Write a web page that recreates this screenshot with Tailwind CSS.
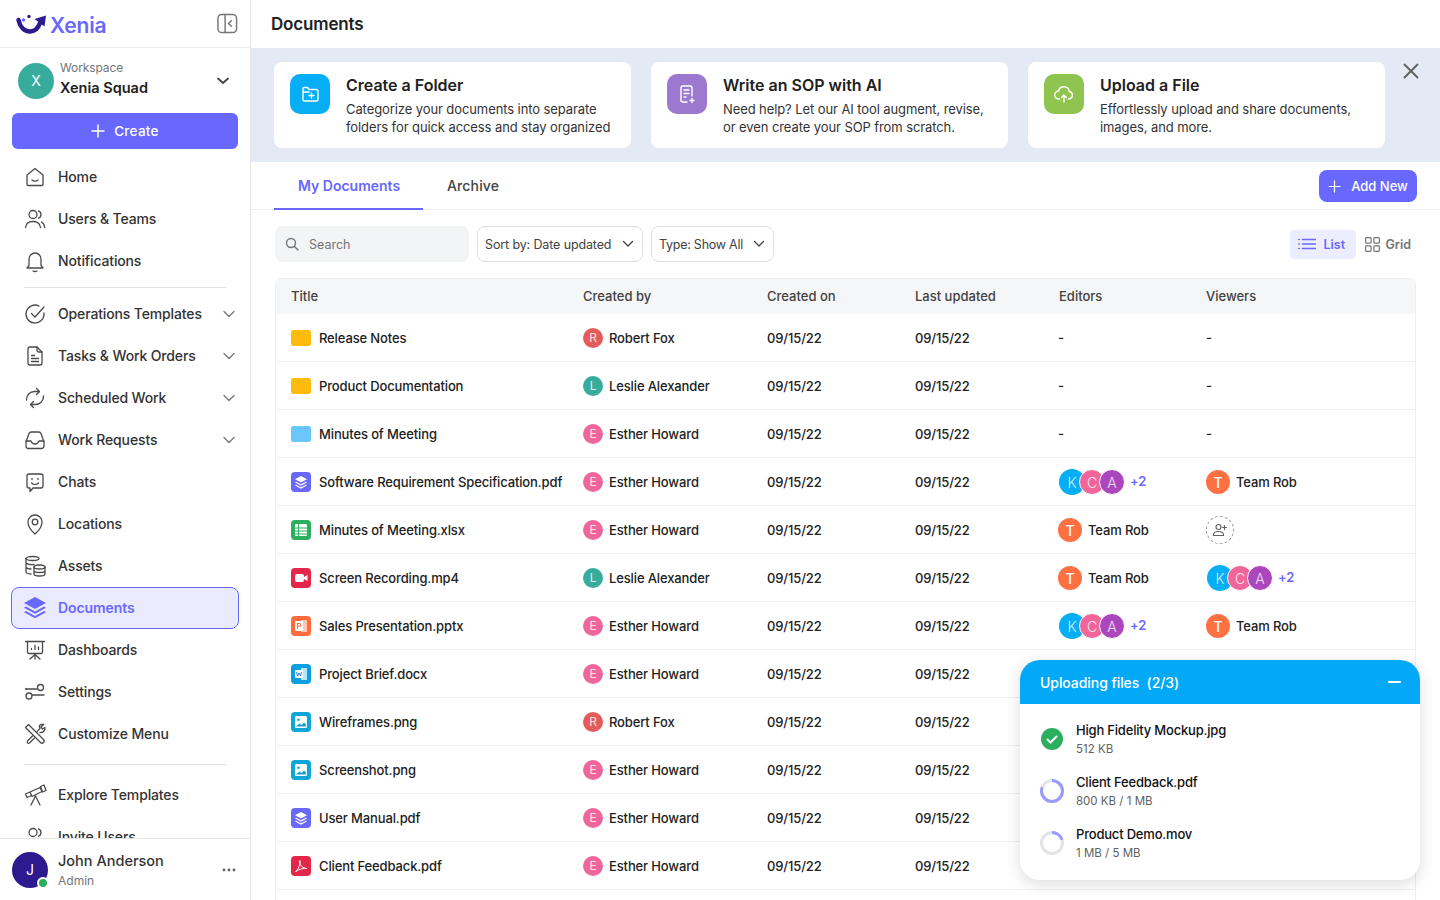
<!DOCTYPE html>
<html lang="en">

<head>
  <meta charset="UTF-8">
  <meta name="viewport" content="width=device-width, initial-scale=1.0">
  <title>Documents</title>
  <script src="https://cdn.jsdelivr.net/npm/@tailwindcss/browser@4"></script>
</head>

<body class="h-screen overflow-hidden bg-white text-[#212121] font-['Inter',sans-serif]">
  <div class="flex h-[900px] overflow-hidden">

    <!-- sidebar -->
    <aside class="w-[251px] shrink-0 h-full border-r border-[#e8e8e8] flex flex-col">
      <div class="h-[48px] shrink-0 border-b border-[#eeeeee] flex items-center justify-between pl-[15px] pr-[12px]">
        <div class="flex items-center gap-[3px]">
          <svg class="w-[32px] h-[22px]" viewBox="0 0 32 22" fill="none">
            <path d="M3.500 7c1.500 7 6 11.500 11.500 11.500 4.500 0 8-3 10-8.500" stroke="#2d1a8e" stroke-width="4.500" stroke-linecap="round"/>
            <path d="M19.500 6 31 2.500l-1.500 11z" fill="#2d1a8e"/>
            <circle cx="8.500" cy="7" r="1.700" fill="#6868fe"/>
            <circle cx="14" cy="3.500" r="1.700" fill="#2d1a8e"/>
          </svg>
          <span class="pt-[3px] text-[21px] leading-none font-semibold text-[#6868fe] tracking-[-0.01em]">Xenia</span>
        </div>
        <svg class="w-[21px] h-[21px] text-[#757575]" viewBox="0 0 22 22" fill="none" stroke="currentColor" stroke-width="1.500">
          <rect x="1" y="1.500" width="19.500" height="19" rx="4"/>
          <path d="M8.500 1.500v19M15 8l-3 3 3 3" stroke-linecap="round" stroke-linejoin="round"/>
        </svg>
      </div>

      <div class="h-[65px] shrink-0 flex items-center pl-[18px] pr-[19px]">
        <div class="w-[36px] h-[36px] rounded-full bg-[#37ac9d] text-white text-[14px] font-normal flex items-center justify-center">X</div>
        <div class="ml-[6px] flex-1 pb-[2px]">
          <div class="text-[12px] leading-[16px] text-[#757575] tracking-[-0.01em]">Workspace</div>
          <div class="pt-[1px] text-[14.500px] leading-[22px] font-semibold">Xenia Squad</div>
        </div>
        <svg class="w-[16px] h-[16px] text-[#424242]" viewBox="0 0 16 16" fill="none" stroke="currentColor" stroke-width="1.800" stroke-linecap="round" stroke-linejoin="round"><path d="m3 5.500 5 4.500 5-4.500"/></svg>
      </div>

      <button class="mx-[12px] h-[36px] shrink-0 rounded-[6px] bg-[#6868fe] text-white text-[13.500px] font-medium tracking-[0.02em] flex items-center justify-center gap-[9px]">
        <svg class="w-[14px] h-[14px]" viewBox="0 0 14 14" fill="none" stroke="currentColor" stroke-width="1.500" stroke-linecap="round"><path d="M7 1v12M1 7h12"/></svg>
        Create
      </button>

      <nav id="nav" class="flex-1 min-h-0 overflow-hidden pt-[7px] -mb-[1px]"></nav>

      <div class="relative h-[62px] shrink-0 border-t border-[#e4e4e4] bg-white flex items-center pl-[12px] pr-[14px]">
        <div class="relative w-[36px] h-[36px] rounded-full bg-[#2d1a8e] text-white text-[14px] flex items-center justify-center">J
          <span class="absolute right-[-1px] bottom-[-1px] w-[12px] h-[12px] rounded-full bg-[#2bae5e] border-2 border-white"></span>
        </div>
        <div class="ml-[10px] flex-1 pt-[2px]">
          <div class="text-[14.500px] leading-[20px] font-medium text-[#333333]">John Anderson</div>
          <div class="text-[12px] leading-[20px] text-[#757575]">Admin</div>
        </div>
        <svg class="w-[14px] h-[4px] text-[#616161]" viewBox="0 0 14 4" fill="currentColor"><circle cx="2" cy="2" r="1.400"/><circle cx="7" cy="2" r="1.400"/><circle cx="12" cy="2" r="1.400"/></svg>
      </div>
    </aside>

    <!-- main -->
    <main class="relative flex-1 min-w-0 h-full overflow-hidden">
      <header class="h-[48px] pt-[2px] flex items-center pl-[20px]">
        <h1 class="text-[17px] font-semibold tracking-[-0.01em]">Documents</h1>
      </header>

      <section class="relative h-[114px] bg-[#e3e9f5] pt-[14px] pl-[23px] flex gap-[20px]">
        <div class="w-[357px] h-[86px] rounded-[8px] bg-white pl-[16px] pt-[12px] flex gap-[16px]">
          <div class="w-[40px] h-[40px] shrink-0 rounded-[10px] bg-[#06aef5] flex items-center justify-center">
            <svg class="w-[20px] h-[20px] text-white" viewBox="0 0 20 20" fill="none" stroke="currentColor" stroke-width="1.400" stroke-linecap="round" stroke-linejoin="round"><path d="M3 15.500V4.500a1 1 0 0 1 1-1h3.500l1.500 2h7a2 2 0 0 1 2 2v8a1.500 1.500 0 0 1-1.500 1.500h-12A1.500 1.500 0 0 1 3 15.500zM3 8h6M11.500 9v5M9 11.500h5"/></svg>
          </div>
          <div>
            <div class="text-[16px] leading-[22px] font-semibold">Create a Folder</div>
            <p class="mt-[4px] text-[13px] leading-[18px] text-[#333333] tracking-[-0.007em]">Categorize your documents into separate<br>folders for quick access and stay organized</p>
          </div>
        </div>
        <div class="w-[357px] h-[86px] rounded-[8px] bg-white pl-[16px] pt-[12px] flex gap-[16px]">
          <div class="w-[40px] h-[40px] shrink-0 rounded-[10px] bg-[#9c78cf] flex items-center justify-center">
            <svg class="w-[20px] h-[20px] text-white" viewBox="0 0 20 20" fill="none" stroke="currentColor" stroke-width="1.400" stroke-linecap="round" stroke-linejoin="round"><path d="M10 18H6a2 2 0 0 1-2-2V4a2 2 0 0 1 2-2h7a2 2 0 0 1 2 2v8M7 6h5M7 9.500h5M7 13h2M15 14.500v4M13 16.500h4"/></svg>
          </div>
          <div>
            <div class="text-[16px] leading-[22px] font-semibold">Write an SOP with AI</div>
            <p class="mt-[4px] text-[13px] leading-[18px] text-[#333333] tracking-[-0.007em]">Need help? Let our AI tool augment, revise,<br>or even create your SOP from scratch.</p>
          </div>
        </div>
        <div class="w-[357px] h-[86px] rounded-[8px] bg-white pl-[16px] pt-[12px] flex gap-[16px]">
          <div class="w-[40px] h-[40px] shrink-0 rounded-[10px] bg-[#8fc44f] flex items-center justify-center">
            <svg class="w-[22px] h-[22px] text-white" viewBox="0 0 22 22" fill="none" stroke="currentColor" stroke-width="1.400" stroke-linecap="round" stroke-linejoin="round"><path d="M6.500 16H6a4 4 0 0 1-.5-8 5.500 5.500 0 0 1 10.800.500A3.800 3.800 0 0 1 16 16h-.5M11 19v-7M8.500 14.500 11 12l2.500 2.500"/></svg>
          </div>
          <div>
            <div class="text-[16px] leading-[22px] font-semibold">Upload a File</div>
            <p class="mt-[4px] text-[13px] leading-[18px] text-[#333333] tracking-[-0.007em]">Effortlessly upload and share documents,<br>images, and more.</p>
          </div>
        </div>
        <svg class="absolute right-[21px] top-[15px] w-[16px] h-[16px] text-[#616161]" viewBox="0 0 16 16" fill="none" stroke="currentColor" stroke-width="1.900" stroke-linecap="round"><path d="m1.500 1.500 13 13M14.500 1.500l-13 13"/></svg>
      </section>

      <!-- tabs -->
      <div class="h-[48px] border-b border-[#eeeeee] pl-[23px] pr-[23px] flex items-start justify-between">
        <div class="flex h-[48px]">
          <div class="w-[149px] h-[48px] pl-[24px] flex items-center border-b-2 border-[#6868fe] text-[14px] font-semibold text-[#6868fe]">My Documents</div>
          <div class="h-[48px] px-[24px] flex items-center text-[14px] font-medium text-[#424242] tracking-[0.01em] pb-[2px]">Archive</div>
        </div>
        <button class="mt-[8px] pt-[1px] w-[98px] h-[32px] rounded-[8px] bg-[#6868fe] text-white text-[13px] font-medium flex items-center justify-center gap-[10px]">
          <svg class="w-[13px] h-[13px]" viewBox="0 0 14 14" fill="none" stroke="currentColor" stroke-width="1.300" stroke-linecap="round"><path d="M7 1v12M1 7h12"/></svg>
          Add New
        </button>
      </div>

      <!-- toolbar -->
      <div class="h-[68px] pl-[24px] pr-[29px] flex items-center">
        <div class="w-[194px] h-[36px] rounded-[8px] bg-[#f3f4f6] flex items-center pl-[10px] gap-[10px] text-[12.500px] text-[#757575]">
          <svg class="w-[14px] h-[14px]" viewBox="0 0 14 14" fill="none" stroke="currentColor" stroke-width="1.400" stroke-linecap="round"><circle cx="6" cy="6" r="4.500"/><path d="m9.500 9.500 3.500 3.500"/></svg>
          <span class="pt-[2px]">Search</span>
        </div>
        <div class="ml-[8px] w-[166px] h-[36px] rounded-[8px] border border-[#e0e0e0] flex items-center justify-between pl-[7px] pr-[8px] text-[12.500px] tracking-[-0.01em] text-[#424242]">
          <span class="pt-[2px]">Sort by: Date updated</span>
          <svg class="w-[12px] h-[12px]" viewBox="0 0 12 12" fill="none" stroke="currentColor" stroke-width="1.300" stroke-linecap="round" stroke-linejoin="round"><path d="m1.500 3.500 4.500 4.500 4.500-4.500"/></svg>
        </div>
        <div class="ml-[8px] w-[123px] h-[36px] rounded-[8px] border border-[#e0e0e0] flex items-center justify-between pl-[7px] pr-[8px] text-[12.500px] tracking-[-0.02em] text-[#424242]">
          <span class="pt-[2px]">Type: Show All</span>
          <svg class="w-[12px] h-[12px]" viewBox="0 0 12 12" fill="none" stroke="currentColor" stroke-width="1.300" stroke-linecap="round" stroke-linejoin="round"><path d="m1.500 3.500 4.500 4.500 4.500-4.500"/></svg>
        </div>
        <div class="ml-auto flex items-center">
          <div class="w-[66px] h-[29px] pl-[8px] rounded-[4px] bg-[#ecedff] flex items-center gap-[7px] text-[12.500px] font-semibold text-[#6868fe]">
            <svg class="w-[18px] h-[12px]" viewBox="0 0 18 12" fill="none" stroke="currentColor" stroke-width="1.500" stroke-linecap="round"><path d="M0.800 1.500h.5M0.800 6h.5M0.800 10.500h.5M4.500 1.500h13M4.500 6h13M4.500 10.500h13"/></svg>
            <span class="pt-[2px]">List</span>
          </div>
          <div class="ml-[9px] flex items-center gap-[5px] text-[12.500px] font-semibold text-[#757575]">
            <svg class="w-[15px] h-[15px]" viewBox="0 0 15 15" fill="none" stroke="currentColor" stroke-width="1.200"><rect x="0.600" y="0.600" width="5.500" height="5.500" rx="0.800"/><rect x="8.900" y="0.600" width="5.500" height="5.500" rx="0.800"/><rect x="0.600" y="8.900" width="5.500" height="5.500" rx="0.800"/><rect x="8.900" y="8.900" width="5.500" height="5.500" rx="0.800"/></svg>
            <span class="pt-[2px]">Grid</span>
          </div>
        </div>
      </div>

      <!-- table -->
      <div class="ml-[24px] w-[1141px] border border-[#eeeeee] rounded-t-[6px]">
        <div class="h-[35px] rounded-t-[6px] bg-[#f5f6f7] pl-[15px] grid grid-cols-[292px_184px_148px_143px_148px_1fr] items-center text-[13px] font-[450] text-[#424242]">
          <div>Title</div><div>Created by</div><div>Created on</div><div>Last updated</div><div class="pl-[1px]">Editors</div><div>Viewers</div>
        </div>
        <div id="rows"></div>
        <div class="h-[48px]"></div>
      </div>

      <!-- upload panel -->
      <div class="absolute left-[769px] top-[660px] w-[400px] h-[220px] rounded-[20px] bg-white shadow-[0_4px_16px_rgba(0,0,0,0.14)] overflow-hidden">
        <div class="h-[44px] bg-[#03a9f7] text-white pl-[20px] pr-[19px] flex items-center justify-between text-[14px] font-medium tracking-[-0.005em]">
          <span>Uploading files&nbsp; (2/3)</span>
          <span class="w-[13px] h-[2px] bg-white rounded-full"></span>
        </div>
        <div class="pl-[20px] pt-[16px]">
          <div class="h-[52px] flex items-start">
            <svg class="mt-[7px] w-[24px] h-[24px] shrink-0" viewBox="0 0 24 24"><circle cx="12" cy="12" r="11" fill="#2bae5e"/><path d="m7.500 12.500 3 3 6-6" fill="none" stroke="#fff" stroke-width="2" stroke-linecap="round" stroke-linejoin="round"/></svg>
            <div class="ml-[12px]">
              <div class="text-[13px] leading-[20px] font-medium text-[#111111] tracking-[-0.015em]">High Fidelity Mockup.jpg</div>
              <div class="mt-[1px] text-[11.500px] leading-[16px] text-[#616161]">512 KB</div>
            </div>
          </div>
          <div class="h-[52px] flex items-start">
            <svg class="mt-[7px] w-[24px] h-[24px] shrink-0" viewBox="0 0 24 24" fill="none" stroke-width="3"><circle cx="12" cy="12" r="10.500" stroke="#e2e4e9"/><circle cx="12" cy="12" r="10.500" stroke="#9b9bfe" stroke-dasharray="53 66" transform="rotate(-90 12 12)"/></svg>
            <div class="ml-[12px]">
              <div class="text-[13px] leading-[20px] font-medium text-[#111111] tracking-[-0.015em]">Client Feedback.pdf</div>
              <div class="mt-[1px] text-[11.500px] leading-[16px] text-[#616161]">800 KB / 1 MB</div>
            </div>
          </div>
          <div class="h-[52px] flex items-start">
            <svg class="mt-[7px] w-[24px] h-[24px] shrink-0" viewBox="0 0 24 24" fill="none" stroke-width="3"><circle cx="12" cy="12" r="10.500" stroke="#e2e4e9"/><circle cx="12" cy="12" r="10.500" stroke="#9b9bfe" stroke-dasharray="13 66" transform="rotate(-90 12 12)"/></svg>
            <div class="ml-[12px]">
              <div class="text-[13px] leading-[20px] font-medium text-[#111111] tracking-[-0.015em]">Product Demo.mov</div>
              <div class="mt-[1px] text-[11.500px] leading-[16px] text-[#616161]">1 MB / 5 MB</div>
            </div>
          </div>
        </div>
      </div>
    </main>
  </div>

  <script>
    // sidebar icons, 24 box
    const NAV_ICONS = {
      home: '<path d="M4 10 12 3.500 20 10v9.500a1 1 0 0 1-1 1H5a1 1 0 0 1-1-1z"/><path d="M9 15c1.500 1.500 4.500 1.500 6 0"/>',
      users: '<circle cx="10" cy="7.500" r="4"/><path d="M2.500 20.500c.5-4 3.500-6 7.500-6s7 2 7.500 6"/><path d="M15.500 3.800a4 4 0 0 1 0 7.400M18.500 15c1.800 1 3 3 3.200 5.500"/>',
      bell: '<path d="M6 16.500V10a6 6 0 0 1 12 0v6.500l2 2.500H4z"/><path d="M10 22c1.200.6 2.800.6 4 0"/>',
      check: '<path d="M21 11v1a9 9 0 1 1-5-8"/><path d="m8.500 11.500 3.500 3.500 9-10"/>',
      doc: '<path d="M7 3h7l5 5v11a2 2 0 0 1-2 2H7a2 2 0 0 1-2-2V5a2 2 0 0 1 2-2z"/><path d="M14 3v3.500A1.500 1.500 0 0 0 15.500 8H19M8.500 11.500h3M8.500 14.500h7M8.500 17.500h7"/>',
      sync: '<path d="M3.500 14a8 8 0 0 1 8-8.500H16M13.500 2.500l3 3-3 3M20.500 10a8 8 0 0 1-8 8.500H8M10.500 15.500l-3 3 3 3"/>',
      inbox: '<path d="M3 14 6 5.500A2.500 2.500 0 0 1 8.300 4h7.400A2.500 2.500 0 0 1 18 5.500l3 8.500v4a2.500 2.500 0 0 1-2.500 2.500h-13A2.500 2.500 0 0 1 3 18z"/><path d="M3 13h5c1 2.500 2.500 3 4 3s3-.5 4-3h5"/>',
      chat: '<path d="M6 4h12a2 2 0 0 1 2 2v10a2 2 0 0 1-2 2h-8l-3 3.500V18H6a2 2 0 0 1-2-2V6a2 2 0 0 1 2-2z"/><path d="M9 8.500v1M15 8.500v1M8.500 13c2 1.800 5 1.800 7 0"/>',
      pin: '<path d="M12 22s7-6 7-12a7 7 0 0 0-14 0c0 6 7 12 7 12z"/><circle cx="12" cy="10" r="2.800"/>',
      assets: '<ellipse cx="9.500" cy="4.500" rx="6.500" ry="2"/><path d="M3 4.500V18c0 1 1.500 1.800 5 2M3 9c1 1.200 4 1.800 8 1.500M3 13.500c1 .9 2.500 1.400 5 1.500"/><ellipse cx="16.500" cy="13" rx="5.500" ry="2"/><path d="M11 13v7c0 1.200 2.500 2 5.500 2s5.500-.8 5.500-2v-7M11 16.500c0 1.200 2.500 2 5.500 2s5.500-.8 5.500-2"/>',
      board: '<path d="M2.500 3.500h19M4.500 3.500V14a1.500 1.500 0 0 0 1.500 1.500h12a1.500 1.500 0 0 0 1.500-1.500V3.500M12 15.500V21M7 21l5-4.500 5 4.500M8.500 11.500v-1M12 11.500v-4M15.500 11.500V9"/>',
      sliders: '<circle cx="17.500" cy="7.500" r="3"/><path d="M3 9h11"/><circle cx="6" cy="16" r="3"/><path d="M9.500 15H21"/><path d="M3 8.500v1" />',
      tools: '<path d="m4 7 13.500 13.500a2 2 0 0 0 3-3L7 4 5.500 2.500l-3 3z"/><path d="M14 9.500 17 6.500a4 4 0 0 1-.5-3 4.500 4.500 0 0 1 4-1l-2.500 2.500 1.500 2 2.500-1.500a4.500 4.500 0 0 1-5 5M9.500 14l-5 5a2 2 0 0 0 0 2 2 2 0 0 0 2 0l5-5"/>',
      scope: '<path d="M7 9 17 4.500l2 4-10 5zM17.500 3.500 21 2l2 5.500-3.500 1.500zM2.500 11 7 9l1.500 3.500-4.500 2zM12.500 13l-4.500 9M12.500 13l4.500 9"/>',
    };
    const CHEVRON = '<svg class="ml-auto mr-[2px] w-[14px] h-[14px] text-[#757575]" viewBox="0 0 14 14" fill="none" stroke="currentColor" stroke-width="1.300" stroke-linecap="round" stroke-linejoin="round"><path d="m2 4.500 5 5 5-5"/></svg>';
    const LAYERS_ACTIVE = '<svg class="w-[24px] h-[24px] shrink-0 text-[#6868fe]" viewBox="0 0 24 24" fill="currentColor"><path d="M12 2 23 8 12 14 1 8z"/><path d="m3 11.500 9 5 9-5 2 1.200-11 6-11-6z"/><path d="m3 16 9 5 9-5 2 1.200-11 6-11-6z"/></svg>';

    const NAV = [
      ["Home", "home"], ["Users & Teams", "users"], ["Notifications", "bell"], "rule",
      ["Operations Templates", "check", 1], ["Tasks & Work Orders", "doc", 1], ["Scheduled Work", "sync", 1], ["Work Requests", "inbox", 1],
      ["Chats", "chat"], ["Locations", "pin"], ["Assets", "assets"], ["Documents", "active"], ["Dashboards", "board"], ["Settings", "sliders"], ["Customize Menu", "tools"], "rule2",
      ["Explore Templates", "scope"], ["Invite Users", "users"],
    ];

    nav.innerHTML = NAV.map((item) => {
      if (item === "rule") return '<div class="mx-[24px] my-[5px] border-t border-[#e0e0e0]"></div>';
      if (item === "rule2") return '<div class="mx-[24px] mt-[9px] mb-[9px] border-t border-[#e0e0e0]"></div>';
      const [label, icon, more] = item;
      if (icon === "active") {
        return `<div class="mx-[11px] h-[42px] rounded-[8px] border border-[#6868fe] bg-[#ebebff] pl-[11px] pb-[2px] flex items-center gap-[11px] text-[14px] font-semibold text-[#6868fe] tracking-[-0.005em]">${LAYERS_ACTIVE}${label}</div>`;
      }
      return `<div class="mx-[12px] h-[42px] pl-[11px] pb-[1px] flex items-center gap-[11px] text-[14px] font-medium text-[#333333] tracking-[-0.01em]">
        <svg class="w-[24px] h-[24px] shrink-0 text-[#4a4a4a]" viewBox="0 0 24 24" fill="none" stroke="currentColor" stroke-width="1.300" stroke-linecap="round" stroke-linejoin="round">${NAV_ICONS[icon]}</svg>
        ${label}${more ? CHEVRON : ""}</div>`;
    }).join("");

    // file type icons, 20 box
    const LAYERS = '<path d="M10 4 16 7.200 10 10.400 4 7.200z" fill="#fff"/><path d="m4.500 10 5.500 3 5.500-3M4.500 13l5.500 3 5.500-3" fill="none" stroke="#fff" stroke-width="1.300"/>';
    const PICTURE = '<rect x="4" y="4" width="12" height="12" rx="1.500" fill="#fff"/><circle cx="7.500" cy="7.800" r="1.300" fill="#0fa5d9"/><path d="m5 14.500 3.500-3 2 1.500 2.500-2.500 2 2v2z" fill="#0fa5d9"/>';
    const FILE_ICONS = {
      folder: '<svg class="w-[20px] h-[16px] shrink-0" viewBox="0 0 20 16"><rect width="20" height="16" rx="2.500" fill="#ffbb0b"/></svg>',
      folderBlue: '<svg class="w-[20px] h-[16px] shrink-0" viewBox="0 0 20 16"><rect width="20" height="16" rx="2.500" fill="#6bc7fb"/><path d="M7 2.500h10" stroke="#5aa8f5" stroke-width=".7" stroke-dasharray="1 1"/></svg>',
      pdf: `<svg class="w-[20px] h-[20px] shrink-0" viewBox="0 0 20 20"><rect width="20" height="20" rx="4" fill="#6868fe"/>${LAYERS}</svg>`,
      xlsx: '<svg class="w-[20px] h-[20px] shrink-0" viewBox="0 0 20 20"><rect width="20" height="20" rx="4" fill="#2bae5e"/><rect x="4" y="4" width="12" height="12" rx="1" fill="#fff"/><path d="M4 8h12M4 11h12M4 14h12M7.500 4v12" stroke="#2bae5e" stroke-width="1"/></svg>',
      mp4: '<svg class="w-[20px] h-[20px] shrink-0" viewBox="0 0 20 20"><rect width="20" height="20" rx="4" fill="#e2274b"/><rect x="4" y="6" width="9" height="8" rx="2" fill="#fff"/><path d="m13 9 3.500-2v6L13 11z" fill="#fff"/></svg>',
      pptx: '<svg class="w-[20px] h-[20px] shrink-0" viewBox="0 0 20 20"><rect width="20" height="20" rx="4" fill="#ff6b3d"/><path d="M10 4h6v12h-6z" fill="#ffc7b2"/><rect x="4" y="5" width="8" height="10" rx="1" fill="#fff"/><path d="M6.500 13V7.500h1.800a1.400 1.400 0 0 1 0 2.800H6.500" fill="none" stroke="#ff6b3d" stroke-width="1.100"/></svg>',
      docx: '<svg class="w-[20px] h-[20px] shrink-0" viewBox="0 0 20 20"><rect width="20" height="20" rx="4" fill="#0ca0e0"/><path d="M10 4h6v12h-6z" fill="#b9e5f8"/><rect x="4" y="6" width="8" height="8" rx="1" fill="#fff"/><path d="m5.500 8 1 4 1.500-3 1.500 3 1-4" fill="none" stroke="#1a73d9" stroke-width=".9"/></svg>',
      png: `<svg class="w-[20px] h-[20px] shrink-0" viewBox="0 0 20 20"><rect width="20" height="20" rx="4" fill="#0fa5d9"/>${PICTURE}</svg>`,
      adobe: '<svg class="w-[20px] h-[20px] shrink-0" viewBox="0 0 20 20"><rect width="20" height="20" rx="4" fill="#e2274b"/><path d="M4.500 15.500c2-1 3.500-4 4.500-8 .3-1.500.5-3-.2-3s-.6 2 .5 4c1 2 3 3.500 6.500 4-2.500-.3-7 .5-8.500 1.500-1.100.8-2 1.700-2.800 1.500z" fill="none" stroke="#fff" stroke-width="1"/></svg>',
    };

    const COLORS = { R: "bg-[#e25c5c]", L: "bg-[#37ac9d]", E: "bg-[#f0659a]" };
    const PEOPLE = { R: "Robert Fox", L: "Leslie Alexander", E: "Esther Howard" };
    const DASH = '<span class="pt-[2px]">-</span>';
    const TEAM = '<div class="flex items-center gap-[6px]"><span class="w-[24px] h-[24px] rounded-full bg-[#ff7043] text-white text-[14px] font-medium flex items-center justify-center">T</span><span class="pt-[2px]">Team Rob</span></div>';
    const STACK = `<div class="flex items-center pl-[1px]">
        <span class="w-[26px] h-[26px] rounded-full bg-[#06aef5] text-white/80 text-[14px] font-light flex items-center justify-center">K</span>
        <span class="-ml-[6px] w-[26px] h-[26px] rounded-full bg-[#f0659a] border border-white text-white/80 text-[14px] font-light flex items-center justify-center">C</span>
        <span class="-ml-[6px] w-[26px] h-[26px] rounded-full bg-[#ab47bc] border border-white text-white/80 text-[14px] font-light flex items-center justify-center">A</span>
        <span class="ml-[5px] text-[13px] font-semibold text-[#6868fe]">+2</span></div>`;
    const ADD = '<span class="w-[28px] h-[28px] rounded-full border border-dashed border-[#9e9e9e] flex items-center justify-center"><svg class="w-[16px] h-[16px] text-[#616161]" viewBox="0 0 16 16" fill="none" stroke="currentColor" stroke-width="1.100" stroke-linecap="round"><circle cx="6.500" cy="5" r="2.500"/><path d="M1.500 13.500v-1c0-2 2-3 5-3s5 1 5 3v1zM12.500 3.500v4M10.500 5.500h4"/></svg></span>';

    const FILES = [
      ["folder", "Release Notes", "R", DASH, DASH],
      ["folder", "Product Documentation", "L", DASH, DASH],
      ["folderBlue", "Minutes of Meeting", "E", DASH, DASH],
      ["pdf", "Software Requirement Specification.pdf", "E", STACK, TEAM],
      ["xlsx", "Minutes of Meeting.xlsx", "E", TEAM, ADD],
      ["mp4", "Screen Recording.mp4", "L", TEAM, STACK],
      ["pptx", "Sales Presentation.pptx", "E", STACK, TEAM],
      ["docx", "Project Brief.docx", "E", "", ""],
      ["png", "Wireframes.png", "R", "", ""],
      ["png", "Screenshot.png", "E", "", ""],
      ["pdf", "User Manual.pdf", "E", "", ""],
      ["adobe", "Client Feedback.pdf", "E", "", ""],
    ];

    rows.innerHTML = FILES.map(([icon, name, who, editors, viewers]) => `
      <div class="h-[48px] border-b border-[#f0f0f0] pl-[15px] pt-[1px] grid grid-cols-[292px_184px_148px_143px_148px_1fr] items-center text-[13px] font-[450] tracking-[-0.01em] text-[#212121]">
        <div class="flex items-center gap-[8px]">${FILE_ICONS[icon]}<span class="pt-[2px] whitespace-nowrap">${name}</span></div>
        <div class="flex items-center gap-[6px]"><span class="w-[20px] h-[20px] rounded-full ${COLORS[who]} text-white/80 text-[12px] font-normal flex items-center justify-center">${who}</span><span class="pt-[2px]">${PEOPLE[who]}</span></div>
        <div class="pt-[2px]">09/15/22</div><div class="pt-[2px]">09/15/22</div>
        <div>${editors}</div><div>${viewers}</div>
      </div>`).join("");
  </script>
</body>

</html>
